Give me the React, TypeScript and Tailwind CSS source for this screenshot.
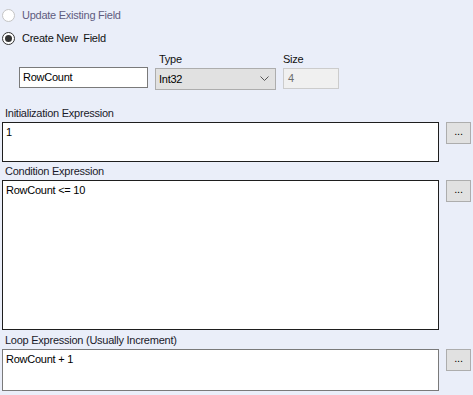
import React from "react";

const font = { fontFamily: '"Liberation Sans", Arial, sans-serif', letterSpacing: "-0.25px" };

function DotsButton() {
  return (
    <div className="w-[25px] h-[22px] shrink-0 border border-[#adadad] bg-[#e1e1e1] flex items-end justify-center text-[11px] leading-none text-[#000] pb-[6px]">
      ...
    </div>
  );
}

function ExprRow({ label, value, h, dark, mt }: { label: string; value: string; h: number; dark: boolean; mt: string }) {
  return (
    <div className={mt}>
      <div className="pl-[5px] h-[15px] leading-[15px] text-[11px] text-[#1a1a2a]">{label}</div>
      <div className="flex items-start mt-[1px]">
        <div
          className={`ml-[2px] w-[437px] bg-white border ${dark ? "border-[#1e1e1e]" : "border-[#7a7a7a]"} px-[3px] pt-[2px] text-[11px] leading-[14px] text-black`}
          style={{ height: h }}
        >
          {value}
        </div>
        <div className="ml-[7px]">
          <DotsButton />
        </div>
      </div>
    </div>
  );
}

export default function App() {
  return (
    <div className="w-[473px] h-[395px] bg-[#eaeef9] overflow-hidden" style={font}>
      <div className="pt-[4px]">
        <div className="h-[23px] flex items-center pl-[2px]">
          <div className="w-[13px] h-[13px] rounded-full border border-[#c4c4c4] bg-white" />
          <span className="ml-[7px] text-[11px] text-[#5f5c80]">Update Existing Field</span>
        </div>
        <div className="h-[23px] flex items-center pl-[2px]">
          <div className="w-[13px] h-[13px] rounded-full border border-[#333] bg-white flex items-center justify-center">
            <div className="w-[7px] h-[7px] rounded-full bg-[#333]" />
          </div>
          <span className="ml-[7px] text-[11px] text-[#111]">Create New&nbsp; Field</span>
        </div>
      </div>
      <div className="flex h-[16px] items-end text-[11px] text-[#111] leading-[14px]">
        <span className="ml-[159px] w-[124px]">Type</span>
        <span>Size</span>
      </div>
      <div className="flex items-start mt-[2px]">
        <div className="ml-[19px] w-[129px] h-[21px] mt-[-1px] bg-white border border-[#7a7a7a] px-[3px] text-[11px] leading-[19px] text-black">
          RowCount
        </div>
        <div className="ml-[7px] w-[121px] h-[22px] bg-[#e1e1e1] border border-[#adadad] flex items-center justify-between pl-[3px] pr-[6px] text-[11px] text-black">
          <span>Int32</span>
          <svg width="9" height="6" viewBox="0 0 9 6">
            <path d="M0.5 0.5 L4.5 4.5 L8.5 0.5" fill="none" stroke="#555" strokeWidth="1" />
          </svg>
        </div>
        <div className="ml-[7px] w-[56px] h-[21px] bg-[#f0f0f0] border border-[#cccccc] px-[4px] text-[11px] leading-[19px] text-[#6d6d6d]">
          4
        </div>
      </div>
      <ExprRow label="Initialization Expression" value="1" h={40} dark mt="mt-[16px]" />
      <ExprRow label="Condition Expression" value="RowCount <= 10" h={150} dark mt="mt-[2px]" />
      <ExprRow label="Loop Expression (Usually Increment)" value="RowCount + 1" h={42} dark={false} mt="mt-[3px]" />
    </div>
  );
}
